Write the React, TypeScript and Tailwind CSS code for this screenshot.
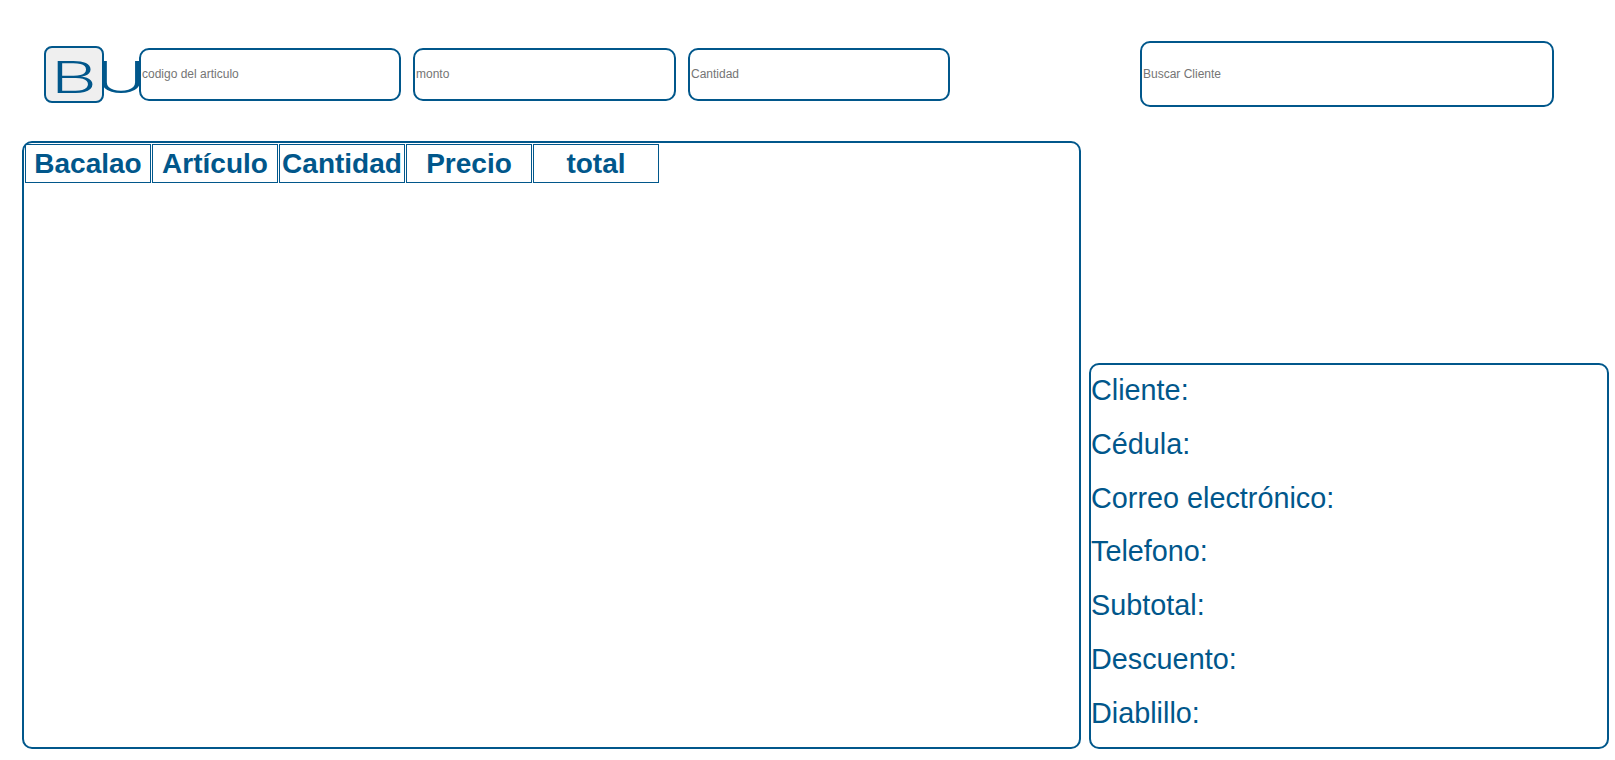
const fields = ['Cliente:', 'Cédula:', 'Correo electrónico:', 'Telefono:', 'Subtotal:', 'Descuento:', 'Diablillo:']

const columns = ['Bacalao', 'Artículo', 'Cantidad', 'Precio', 'total']

function App() {
  return (
    <div className="min-h-screen bg-white pt-[41px] font-['Liberation_Sans',Arial,sans-serif] text-[#01578b]">
      <div className="flex items-center h-[66px] pl-[44px]">
        <button className="shrink-0 w-[60px] h-[57px] border-2 border-[#01578b] rounded-[8px] bg-[#efefef] text-left pl-[5px] pt-[6px] whitespace-nowrap overflow-visible">
          <span className="inline-block origin-left scale-x-[1.65] font-['Roboto',sans-serif] font-light text-[45px] leading-none text-[#01578b]">
            BU
          </span>
        </button>
        <input
          placeholder="codigo del articulo"
          className="shrink-0 ml-[35px] w-[262px] h-[53px] border-2 border-[#01578b] rounded-[10px] bg-white px-[1px] text-[12px] outline-none placeholder:text-[#757575]"
        />
        <input
          placeholder="monto"
          className="shrink-0 ml-[12px] w-[263px] h-[53px] border-2 border-[#01578b] rounded-[10px] bg-white px-[1px] text-[12px] outline-none placeholder:text-[#757575]"
        />
        <input
          placeholder="Cantidad"
          className="shrink-0 ml-[12px] w-[262px] h-[53px] border-2 border-[#01578b] rounded-[10px] bg-white px-[1px] text-[12px] outline-none placeholder:text-[#757575]"
        />
        <input
          placeholder="Buscar Cliente"
          className="shrink-0 ml-[190px] w-[414px] h-[66px] border-2 border-[#01578b] rounded-[10px] bg-white px-[1px] text-[12px] outline-none placeholder:text-[#757575]"
        />
      </div>

      <div className="flex items-end gap-[8px] pl-[22px] mt-[34px]">
        <div className="shrink-0 w-[1059px] h-[608px] border-2 border-[#01578b] rounded-[10px]">
          <table className="border-separate border-spacing-[1.5px]">
            <thead>
              <tr>
                {columns.map((c) => (
                  <th
                    key={c}
                    className="w-[126px] p-0 border border-[#01578b] text-[28px] leading-[37px] font-bold text-center whitespace-nowrap"
                  >
                    {c}
                  </th>
                ))}
              </tr>
            </thead>
            <tbody />
          </table>
        </div>

        <div className="shrink-0 w-[520px] h-[386px] border-2 border-[#01578b] rounded-[10px]">
          <div className="-mt-[1px]">
            {fields.map((f) => (
              <div key={f} className="text-[28.8px] leading-[53.8px] whitespace-nowrap">
                {f}
              </div>
            ))}
          </div>
        </div>
      </div>
    </div>
  )
}

export default App
